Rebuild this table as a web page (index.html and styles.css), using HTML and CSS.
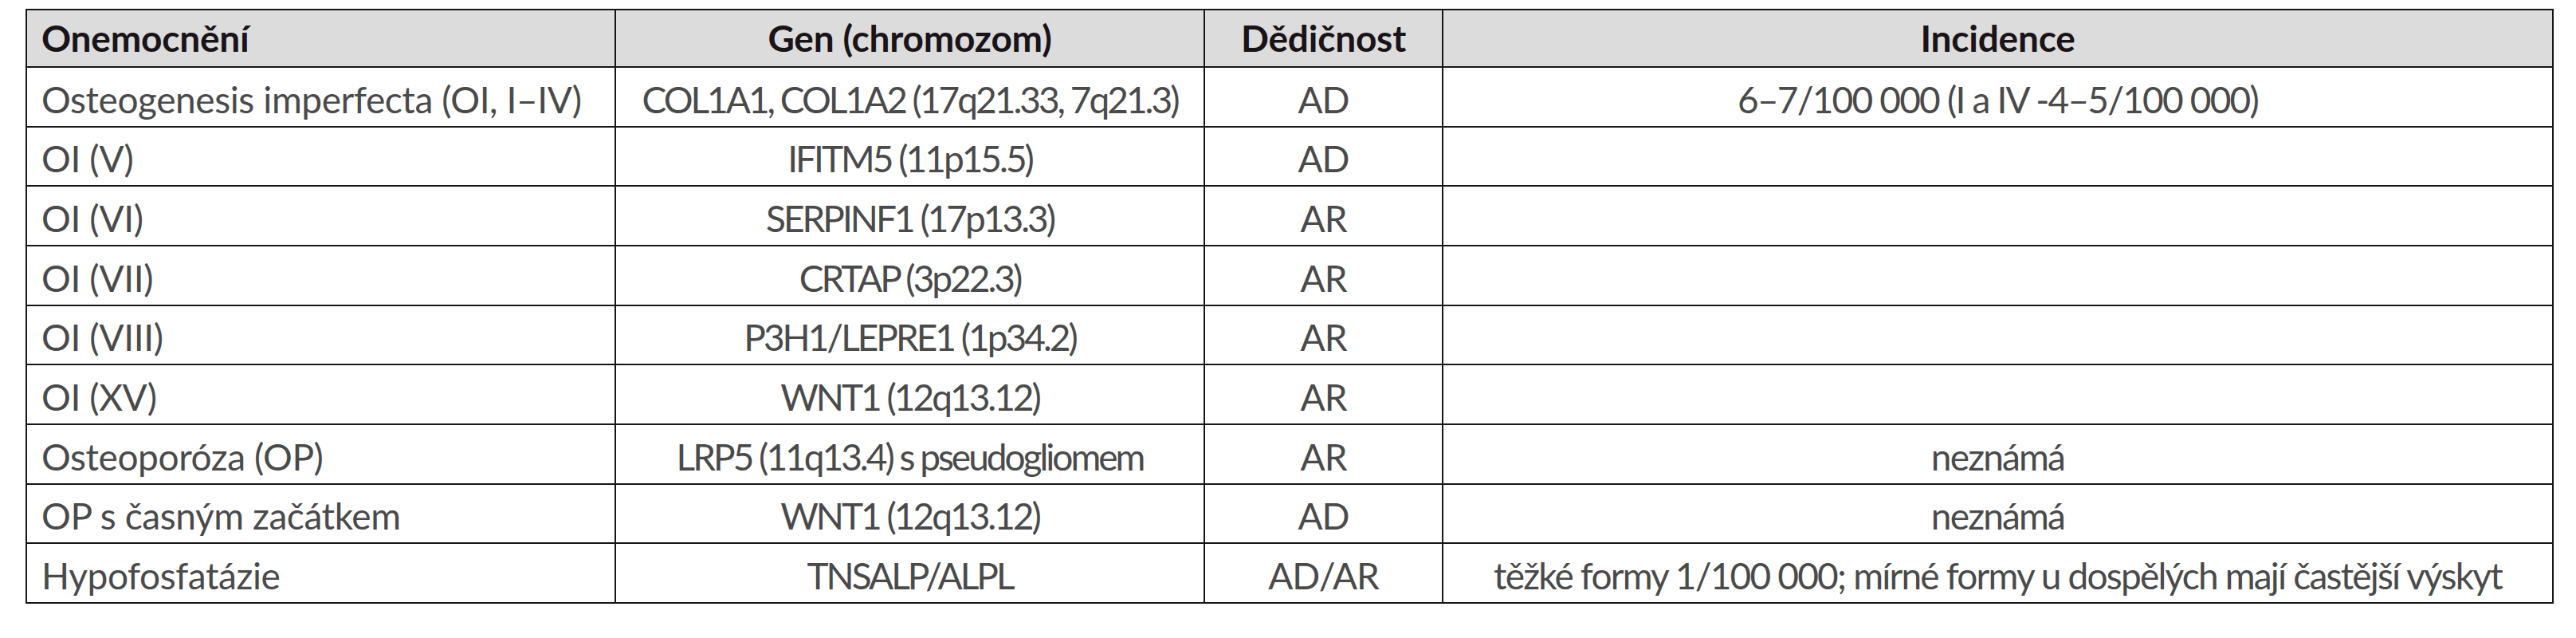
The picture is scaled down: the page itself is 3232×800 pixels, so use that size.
FILE: index.html
```html
<!DOCTYPE html>
<html lang="cs">
<head>
<meta charset="utf-8">
<title>Tabulka</title>
<link rel="stylesheet" href="styles.css">
</head>
<body>
<main class="page">
  <table class="grid">
    <colgroup>
      <col class="c-disease">
      <col class="c-gene">
      <col class="c-inherit">
      <col class="c-incidence">
    </colgroup>
    <thead>
      <tr class="head-row">
        <th class="disease">Onemocnění</th>
        <th class="gene">Gen (chromozom)</th>
        <th class="inherit">Dědičnost</th>
        <th class="incidence">Incidence</th>
      </tr>
    </thead>
    <tbody>
      <tr>
        <td class="disease">Osteogenesis imperfecta (OI, I–IV)</td>
        <td class="gene">COL1A1, COL1A2 (17q21.33, 7q21.3)</td>
        <td class="inherit">AD</td>
        <td class="incidence">6–7/100 000 (I a IV -4–5/100 000)</td>
      </tr>
      <tr>
        <td class="disease">OI (V)</td>
        <td class="gene">IFITM5 (11p15.5)</td>
        <td class="inherit">AD</td>
        <td class="incidence"></td>
      </tr>
      <tr>
        <td class="disease">OI (VI)</td>
        <td class="gene">SERPINF1 (17p13.3)</td>
        <td class="inherit">AR</td>
        <td class="incidence"></td>
      </tr>
      <tr>
        <td class="disease">OI (VII)</td>
        <td class="gene">CRTAP (3p22.3)</td>
        <td class="inherit">AR</td>
        <td class="incidence"></td>
      </tr>
      <tr>
        <td class="disease">OI (VIII)</td>
        <td class="gene">P3H1/LEPRE1 (1p34.2)</td>
        <td class="inherit">AR</td>
        <td class="incidence"></td>
      </tr>
      <tr>
        <td class="disease">OI (XV)</td>
        <td class="gene">WNT1 (12q13.12)</td>
        <td class="inherit">AR</td>
        <td class="incidence"></td>
      </tr>
      <tr>
        <td class="disease">Osteoporóza (OP)</td>
        <td class="gene">LRP5 (11q13.4) s pseudogliomem</td>
        <td class="inherit">AR</td>
        <td class="incidence">neznámá</td>
      </tr>
      <tr>
        <td class="disease">OP s časným začátkem</td>
        <td class="gene">WNT1 (12q13.12)</td>
        <td class="inherit">AD</td>
        <td class="incidence">neznámá</td>
      </tr>
      <tr>
        <td class="disease">Hypofosfatázie</td>
        <td class="gene">TNSALP/ALPL</td>
        <td class="inherit">AD/AR</td>
        <td class="incidence">těžké formy 1/100 000; mírné formy u dospělých mají častější výskyt</td>
      </tr>
    </tbody>
  </table>
</main>
</body>
</html>
```

FILE: styles.css
```css
html, body {
  margin: 0;
  padding: 0;
  background: #ffffff;
}

.page {
  padding: 11px 0 0 32px;
}

.grid {
  border-collapse: collapse;
  table-layout: fixed;
  width: 3170px;
  font-family: Lato, "Open Sans", sans-serif;
  font-size: 46px;
  line-height: 1.2;
  color: #4a4a4a;
}

.c-disease { width: 739px; }
.c-gene { width: 739px; }
.c-inherit { width: 299px; }
.c-incidence { width: 1393px; }

.head-row { height: 72px; }
.grid tbody tr { height: 74.67px; }

.grid th,
.grid td {
  border: 2px solid #161616;
  padding: 0 18px;
  text-align: center;
  vertical-align: middle;
  white-space: nowrap;
  overflow: hidden;
}

.grid th {
  background: #dcdcdc;
  color: #1a1318;
  font-weight: 700;
  letter-spacing: -0.2px;
}

.grid td {
  font-weight: 400;
  padding-top: 6px;
}

.grid .disease {
  text-align: left;
}

.grid td.disease { letter-spacing: -0.4px; }
.grid td.gene { letter-spacing: -3px; }
.grid td.inherit { letter-spacing: -1px; }
.grid td.incidence { letter-spacing: -1.8px; }
```
